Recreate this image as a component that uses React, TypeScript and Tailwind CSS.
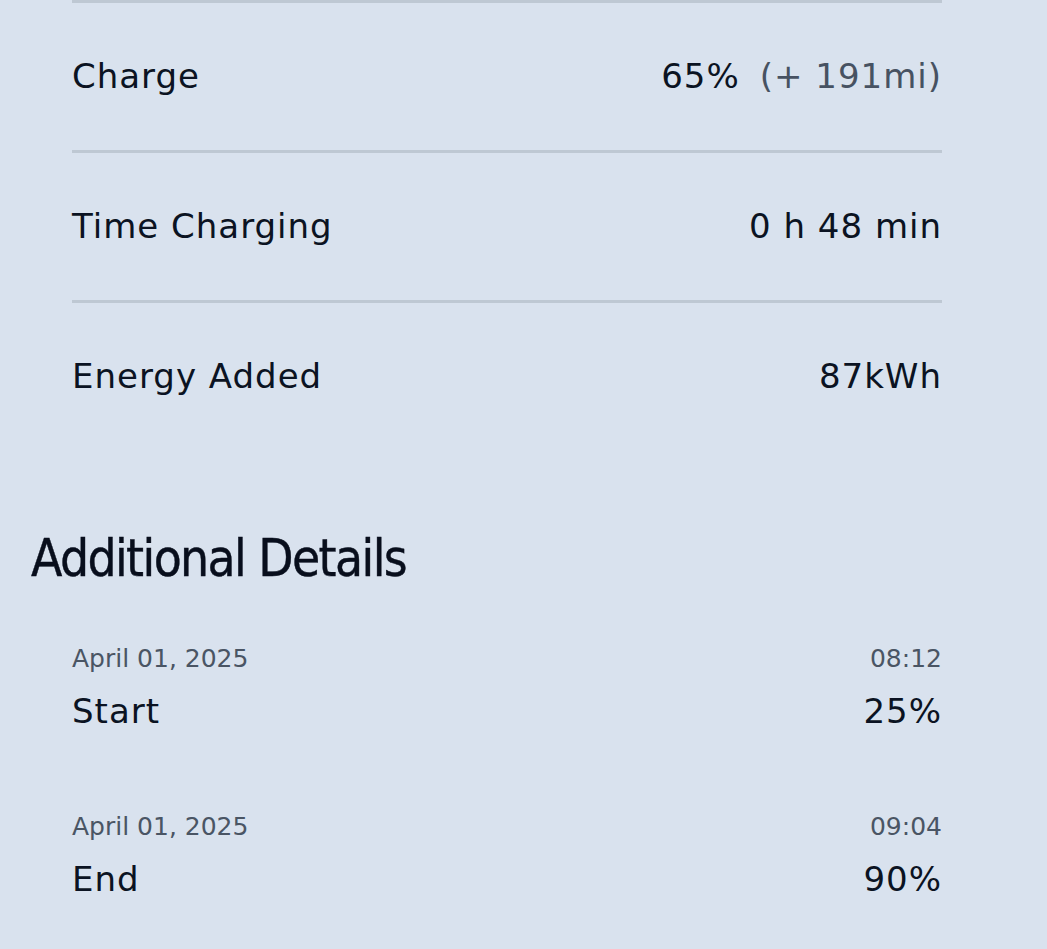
import React from 'react';

function SummaryRow({ label, value, extra }: { label: string; value: string; extra?: string }) {
  return (
    <div className="h-[150px] flex flex-col">
      <div className="h-[3px] bg-[#bec8d3]" />
      <div className="flex-1 flex items-center justify-between text-[34px] text-[#0b1322] tracking-[1px]">
        <span>{label}</span>
        <span>
          {value}
          {extra && <span className="ml-5 text-[#475262]">{extra}</span>}
        </span>
      </div>
    </div>
  );
}

function DetailRow({ date, time, label, value }: { date: string; time: string; label: string; value: string }) {
  return (
    <div className="flex flex-col">
      <div className="flex justify-between text-[25px] text-[#4a5564] leading-[34px]">
        <span>{date}</span>
        <span>{time}</span>
      </div>
      <div className="flex justify-between text-[34px] text-[#0b1322] leading-[52px] mt-[9px] tracking-[1px]">
        <span>{label}</span>
        <span>{value}</span>
      </div>
    </div>
  );
}

export default function App() {
  return (
    <div className="min-h-screen w-full bg-[#d9e2ee] font-['DejaVu_Sans','Noto_Sans',sans-serif]">
      {/* Charge summary */}
      <div className="pl-[72px] pr-[105px]">
        <SummaryRow label="Charge" value="65%" extra="(+ 191mi)" />
        <SummaryRow label="Time Charging" value="0 h 48 min" />
        <SummaryRow label="Energy Added" value="87kWh" />
      </div>

      <h2 className="pl-[31px] mt-[81px] text-[51px] text-[#080e1c] leading-[56px] tracking-[-1.6px] font-['DejaVu_Sans_Condensed','DejaVu_Sans',sans-serif] [-webkit-text-stroke:0.4px_#080e1c]">
        Additional Details
      </h2>

      {/* Start / end */}
      <div className="pl-[72px] pr-[105px] mt-[55px] flex flex-col gap-[73px]">
        <DetailRow date="April 01, 2025" time="08:12" label="Start" value="25%" />
        <DetailRow date="April 01, 2025" time="09:04" label="End" value="90%" />
      </div>
    </div>
  );
}
